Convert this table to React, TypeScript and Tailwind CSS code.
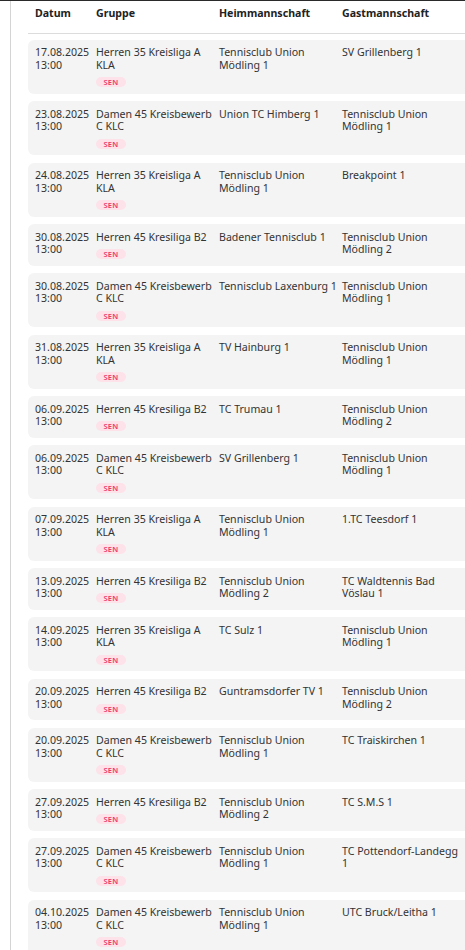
import React from 'react';

type Match = {
  date: string;
  time: string;
  group: string;
  home: string;
  guest: string;
};

const matches: Match[] = [
  { date: '17.08.2025', time: '13:00', group: 'Herren 35 Kreisliga A KLA', home: 'Tennisclub Union Mödling 1', guest: 'SV Grillenberg 1' },
  { date: '23.08.2025', time: '13:00', group: 'Damen 45 Kreisbewerb C KLC', home: 'Union TC Himberg 1', guest: 'Tennisclub Union Mödling 1' },
  { date: '24.08.2025', time: '13:00', group: 'Herren 35 Kreisliga A KLA', home: 'Tennisclub Union Mödling 1', guest: 'Breakpoint 1' },
  { date: '30.08.2025', time: '13:00', group: 'Herren 45 Kresiliga B2', home: 'Badener Tennisclub 1', guest: 'Tennisclub Union Mödling 2' },
  { date: '30.08.2025', time: '13:00', group: 'Damen 45 Kreisbewerb C KLC', home: 'Tennisclub Laxenburg 1', guest: 'Tennisclub Union Mödling 1' },
  { date: '31.08.2025', time: '13:00', group: 'Herren 35 Kreisliga A KLA', home: 'TV Hainburg 1', guest: 'Tennisclub Union Mödling 1' },
  { date: '06.09.2025', time: '13:00', group: 'Herren 45 Kresiliga B2', home: 'TC Trumau 1', guest: 'Tennisclub Union Mödling 2' },
  { date: '06.09.2025', time: '13:00', group: 'Damen 45 Kreisbewerb C KLC', home: 'SV Grillenberg 1', guest: 'Tennisclub Union Mödling 1' },
  { date: '07.09.2025', time: '13:00', group: 'Herren 35 Kreisliga A KLA', home: 'Tennisclub Union Mödling 1', guest: '1.TC Teesdorf 1' },
  { date: '13.09.2025', time: '13:00', group: 'Herren 45 Kresiliga B2', home: 'Tennisclub Union Mödling 2', guest: 'TC Waldtennis Bad Vöslau 1' },
  { date: '14.09.2025', time: '13:00', group: 'Herren 35 Kreisliga A KLA', home: 'TC Sulz 1', guest: 'Tennisclub Union Mödling 1' },
  { date: '20.09.2025', time: '13:00', group: 'Herren 45 Kresiliga B2', home: 'Guntramsdorfer TV 1', guest: 'Tennisclub Union Mödling 2' },
  { date: '20.09.2025', time: '13:00', group: 'Damen 45 Kreisbewerb C KLC', home: 'Tennisclub Union Mödling 1', guest: 'TC Traiskirchen 1' },
  { date: '27.09.2025', time: '13:00', group: 'Herren 45 Kresiliga B2', home: 'Tennisclub Union Mödling 2', guest: 'TC S.M.S 1' },
  { date: '27.09.2025', time: '13:00', group: 'Damen 45 Kreisbewerb C KLC', home: 'Tennisclub Union Mödling 1', guest: 'TC Pottendorf-Landegg 1' },
  { date: '04.10.2025', time: '13:00', group: 'Damen 45 Kreisbewerb C KLC', home: 'Tennisclub Union Mödling 1', guest: 'UTC Bruck/Leitha 1' },
];

const MatchRow = ({ m }: { m: Match }) => (
  <div className="flex w-[520px] rounded-[6px] bg-[#f4f4f4] pl-[7px] pt-[6.5px] pb-[6.5px]">
    <div className="w-[61px] shrink-0">
      <div>{m.date}</div>
      <div>{m.time}</div>
    </div>
    <div className="w-[123px] shrink-0 pr-[4px]">
      <div>{m.group}</div>
      <div className="mt-[6px] flex h-[10px] w-[30px] items-center justify-center rounded-full bg-[#fde2ea] text-[7.5px] leading-[10px] font-semibold tracking-[0.3px] text-[#ef3468]">
        SEN
      </div>
    </div>
    <div className="w-[123px] shrink-0 pr-[4px]">{m.home}</div>
    <div className="w-[123px] shrink-0 pr-[4px]">{m.guest}</div>
  </div>
);

export default function App() {
  return (
    <div className="h-[950px] w-[465px] overflow-hidden border-t border-[#2a2a2a] bg-white font-['Noto_Sans',sans-serif] text-[10.6px] leading-[12.5px] text-[#333]">
      <div className="ml-[10px] h-full border-l border-[#d4d4d4] pl-[17px]">
        <div className="flex w-[520px] border-b border-[#dcdcdc] pl-[7px] pt-[6px] pb-[13px] font-bold text-[#222]">
          <div className="w-[61px] shrink-0">Datum</div>
          <div className="w-[123px] shrink-0">Gruppe</div>
          <div className="w-[123px] shrink-0">Heimmannschaft</div>
          <div className="w-[123px] shrink-0">Gastmannschaft</div>
        </div>
        <div className="mt-[6px] flex flex-col gap-[7.5px]">
          {matches.map((m, i) => (
            <MatchRow key={i} m={m} />
          ))}
        </div>
      </div>
    </div>
  );
}
